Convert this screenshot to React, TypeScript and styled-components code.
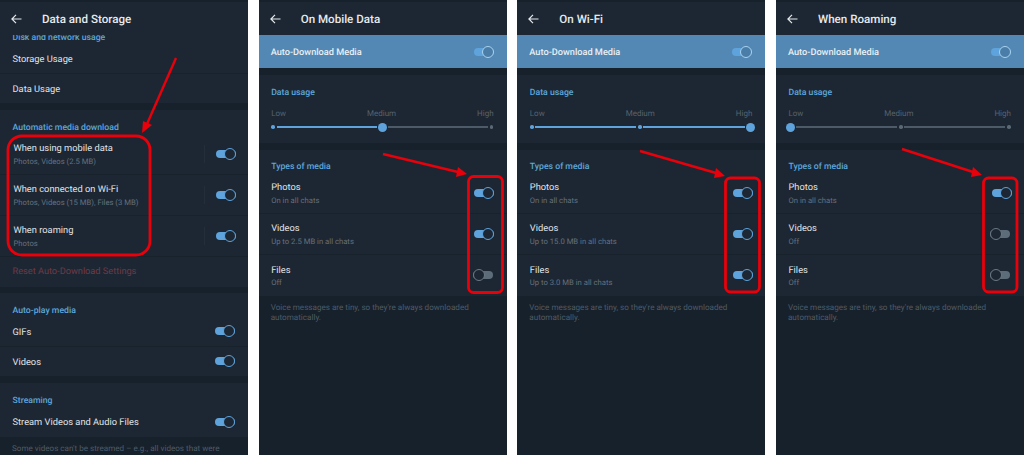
import React from "react";
import styled, { createGlobalStyle } from "styled-components";

const Global = createGlobalStyle`
  html, body { margin: 0; padding: 0; background: #fff; }
  body { font-family: Roboto, "Liberation Sans", sans-serif; text-rendering: geometricPrecision; }
`;

const Page = styled.div`
  position: relative;
  width: 1024px;
  height: 455px;
  overflow: hidden;
  display: flex;
  justify-content: space-between;
  background: #fff;
`;

const Panel = styled.div`
  width: 248px;
  height: 455px;
  display: flex;
  flex-direction: column;
  overflow: hidden;
  background: #17212b;
`;

const Header = styled.div`
  flex: none;
  position: relative;
  z-index: 1;
  height: 33px;
  margin-top: 2px;
  display: flex;
  align-items: center;
  gap: 20px;
  padding-left: 11px;
  background: #1d2733;
  color: #e6eaed;
  font-size: 11.6px;
  font-weight: 500;
`;

const Back = styled.svg`
  width: 11px;
  height: 10px;
  flex: none;
`;

const MasterRow = styled.div`
  flex: none;
  height: 33px;
  display: flex;
  align-items: center;
  justify-content: space-between;
  padding: 0 13px 0 12px;
  background: #5288b3;
  color: #e9eff4;
  font-size: 9.2px;
  font-weight: 500;
`;

const MasterLabel = styled.span`
  margin-top: 2px;
`;

const Section = styled.section<{ $gap?: number }>`
  flex: none;
  background: #1d2733;
  margin-top: ${(p) => p.$gap ?? 0}px;
`;

const Title = styled.div<{ $height: number }>`
  height: ${(p) => p.$height}px;
  display: flex;
  align-items: flex-end;
  padding-left: 12.5px;
  box-sizing: border-box;
  color: #5ea7dc;
  font-size: 8.7px;
  font-weight: 500;
  line-height: 11px;
`;

const Row = styled.div<{ $height: number; $left?: number; $right?: number }>`
  height: ${(p) => p.$height}px;
  box-sizing: border-box;
  display: flex;
  align-items: center;
  justify-content: space-between;
  padding: 0 ${(p) => p.$right ?? 13}px 0 ${(p) => p.$left ?? 12.5}px;
  border-bottom: 1px solid #18222c;
  &:last-child { border-bottom: 0; }
`;

const Label = styled.div`
  color: #e0e4e8;
  font-size: 9.3px;
  line-height: 13px;
  margin-top: 2px;
`;

const Sub = styled.div`
  color: #65717d;
  font-size: 7.7px;
  line-height: 10px;
  margin-top: 1.5px;
`;

const Controls = styled.div`
  display: flex;
  align-items: center;
  gap: 11px;
`;

const Divider = styled.div`
  width: 1px;
  height: 18px;
  background: #222e3a;
`;

const ResetText = styled.div`
  color: #6f3a47;
  font-size: 9.2px;
  line-height: 13px;
`;

const Track = styled.div<{ $on: boolean; $light?: boolean }>`
  position: relative;
  flex: none;
  width: 20px;
  height: 8px;
  border-radius: 4px;
  margin-right: ${(p) => (p.$on ? 0 : 1.5)}px;
  background: ${(p) => (p.$on ? "#5ea3dc" : "#5d6c79")};
  &::after {
    content: "";
    position: absolute;
    top: -2px;
    ${(p) => (p.$on ? "right: 0;" : "left: 0;")}
    width: 12px;
    height: 12px;
    box-sizing: border-box;
    border-radius: 50%;
    border: 1px solid ${(p) => (p.$on ? (p.$light ? "#a9d2ee" : "#5ea3dc") : "#6b7985")};
    background: ${(p) => (p.$light ? "#4a7da7" : "#1d2733")};
  }
`;

const Note = styled.div`
  flex: 1;
  padding: 7.5px 12px 0;
  color: #4f5b67;
  font-size: 8.1px;
  line-height: 9.5px;
`;

const LevelLabels = styled.div`
  display: flex;
  justify-content: space-between;
  padding: 0 13px 0 12.5px;
  margin-top: 9.5px;
  color: #56626e;
  font-size: 8px;
  line-height: 12px;
`;

const Slider = styled.div`
  display: flex;
  align-items: center;
  height: 12px;
  margin: 1px 12.5px 10px 12px;
`;

const DotSlot = styled.div`
  flex: none;
  width: 5px;
  display: flex;
  align-items: center;
  justify-content: center;
`;

const Segment = styled.div<{ $active: boolean; $before: number; $after: number }>`
  flex: 1;
  height: 1.5px;
  margin: 0 ${(p) => p.$after}px 0 ${(p) => p.$before}px;
  background: ${(p) => (p.$active ? "#5ea3dc" : "#4d5a67")};
`;

const Dot = styled.div<{ $selected: boolean; $active: boolean }>`
  flex: none;
  width: ${(p) => (p.$selected ? 9 : 3.5)}px;
  height: ${(p) => (p.$selected ? 9 : 3.5)}px;
  border-radius: 50%;
  background: ${(p) => (p.$active ? "#5ea3dc" : "#5b6875")};
`;

const Annotations = styled.svg`
  position: absolute;
  left: 0;
  top: 0;
  width: 1024px;
  height: 455px;
  pointer-events: none;
  z-index: 5;
`;

const BackIcon = () => (
  <Back viewBox="0 0 11 10" fill="none" stroke="#e6eaed" strokeWidth="1.2">
    <path d="M0.8 5H10.5M5 0.9L0.9 5L5 9.1" />
  </Back>
);

const Toggle = ({ on = true, light = false }: { on?: boolean; light?: boolean }) => (
  <Track $on={on} $light={light} />
);

const LevelSlider = ({ level }: { level: number }) => (
  <>
    <LevelLabels>
      <span>Low</span>
      <span>Medium</span>
      <span>High</span>
    </LevelLabels>
    <Slider>
      {[0, 1, 2].map((i) => (
        <React.Fragment key={i}>
          <DotSlot>
            <Dot $selected={i === level} $active={i <= level} />
          </DotSlot>
          {i < 2 && (
            <Segment
              $active={i < level}
              $before={i === level ? 3.2 : 1}
              $after={i + 1 === level ? 3.2 : 1}
            />
          )}
        </React.Fragment>
      ))}
    </Slider>
  </>
);

type Media = { name: string; sub: string; on: boolean };

const DetailPanel = ({ title, level, media }: { title: string; level: number; media: Media[] }) => (
  <Panel>
    <Header>
      <BackIcon />
      {title}
    </Header>
    <MasterRow>
      <MasterLabel>Auto-Download Media</MasterLabel>
      <Toggle light />
    </MasterRow>
    <Section $gap={7}>
      <Title $height={23.5}>Data usage</Title>
      <LevelSlider level={level} />
    </Section>
    <Section $gap={7}>
      <Title $height={22.5}>Types of media</Title>
      {media.map((m) => (
        <Row key={m.name} $height={41} $right={12.4}>
          <div>
            <Label>{m.name}</Label>
            <Sub>{m.sub}</Sub>
          </div>
          <Toggle on={m.on} />
        </Row>
      ))}
    </Section>
    <Note>Voice messages are tiny, so they're always downloaded automatically.</Note>
  </Panel>
);

const autoRows = [
  { name: "When using mobile data", sub: "Photos, Videos (2.5 MB)" },
  { name: "When connected on Wi-Fi", sub: "Photos, Videos (15 MB), Files (3 MB)" },
  { name: "When roaming", sub: "Photos" },
];

const SettingsPanel = () => (
  <Panel>
    <Header>
      <BackIcon />
      Data and Storage
    </Header>
    <Section>
      <Title $height={9}>Disk and network usage</Title>
      <Row $height={29.5}><Label>Storage Usage</Label></Row>
      <Row $height={29.5}><Label>Data Usage</Label></Row>
    </Section>
    <Section $gap={7}>
      <Title $height={23.5}>Automatic media download</Title>
      {autoRows.map((r) => (
        <Row key={r.name} $height={41} $left={13.5} $right={12}>
          <div>
            <Label>{r.name}</Label>
            <Sub>{r.sub}</Sub>
          </div>
          <Controls>
            <Divider />
            <Toggle />
          </Controls>
        </Row>
      ))}
      <Row $height={30.5}><ResetText>Reset Auto-Download Settings</ResetText></Row>
    </Section>
    <Section $gap={6}>
      <Title $height={24}>Auto-play media</Title>
      <Row $height={29.5}><Label>GIFs</Label><Toggle /></Row>
      <Row $height={29.5}><Label>Videos</Label><Toggle /></Row>
    </Section>
    <Section $gap={7}>
      <Title $height={24}>Streaming</Title>
      <Row $height={29.5}><Label>Stream Videos and Audio Files</Label><Toggle /></Row>
    </Section>
    <Note>Some videos can't be streamed – e.g., all videos that were</Note>
  </Panel>
);

const ArrowMark = ({ d, head }: { d: string; head: string }) => (
  <>
    <path d={d} stroke="#e8000b" strokeWidth="2.4" fill="none" />
    <polygon points={head} fill="#e8000b" />
  </>
);

export default function App() {
  return (
    <Page>
      <Global />
      <SettingsPanel />
      <DetailPanel
        title="On Mobile Data"
        level={1}
        media={[
          { name: "Photos", sub: "On in all chats", on: true },
          { name: "Videos", sub: "Up to 2.5 MB in all chats", on: true },
          { name: "Files", sub: "Off", on: false },
        ]}
      />
      <DetailPanel
        title="On Wi-Fi"
        level={2}
        media={[
          { name: "Photos", sub: "On in all chats", on: true },
          { name: "Videos", sub: "Up to 15.0 MB in all chats", on: true },
          { name: "Files", sub: "Up to 3.0 MB in all chats", on: true },
        ]}
      />
      <DetailPanel
        title="When Roaming"
        level={0}
        media={[
          { name: "Photos", sub: "On in all chats", on: true },
          { name: "Videos", sub: "Off", on: false },
          { name: "Files", sub: "Off", on: false },
        ]}
      />
      <Annotations viewBox="0 0 1024 455">
        <g fill="none" stroke="#e8000b" strokeWidth="2.8">
          <rect x="8" y="136" width="142" height="119" rx="14" />
          <rect x="468.5" y="176.5" width="34" height="116" rx="5" />
          <rect x="725.5" y="178" width="34" height="114" rx="5" />
          <rect x="983.5" y="178" width="33.5" height="114" rx="5" />
        </g>
        <ArrowMark d="M176 58L147 124" head="142,133 143,121 152,125" />
        <ArrowMark d="M383 154L458 172" head="467,174 456,177 458,167" />
        <ArrowMark d="M640 151L716 173" head="725,176 714,178 716,168" />
        <ArrowMark d="M902 149L973 172" head="982,175 971,177 973,167" />
      </Annotations>
    </Page>
  );
}
